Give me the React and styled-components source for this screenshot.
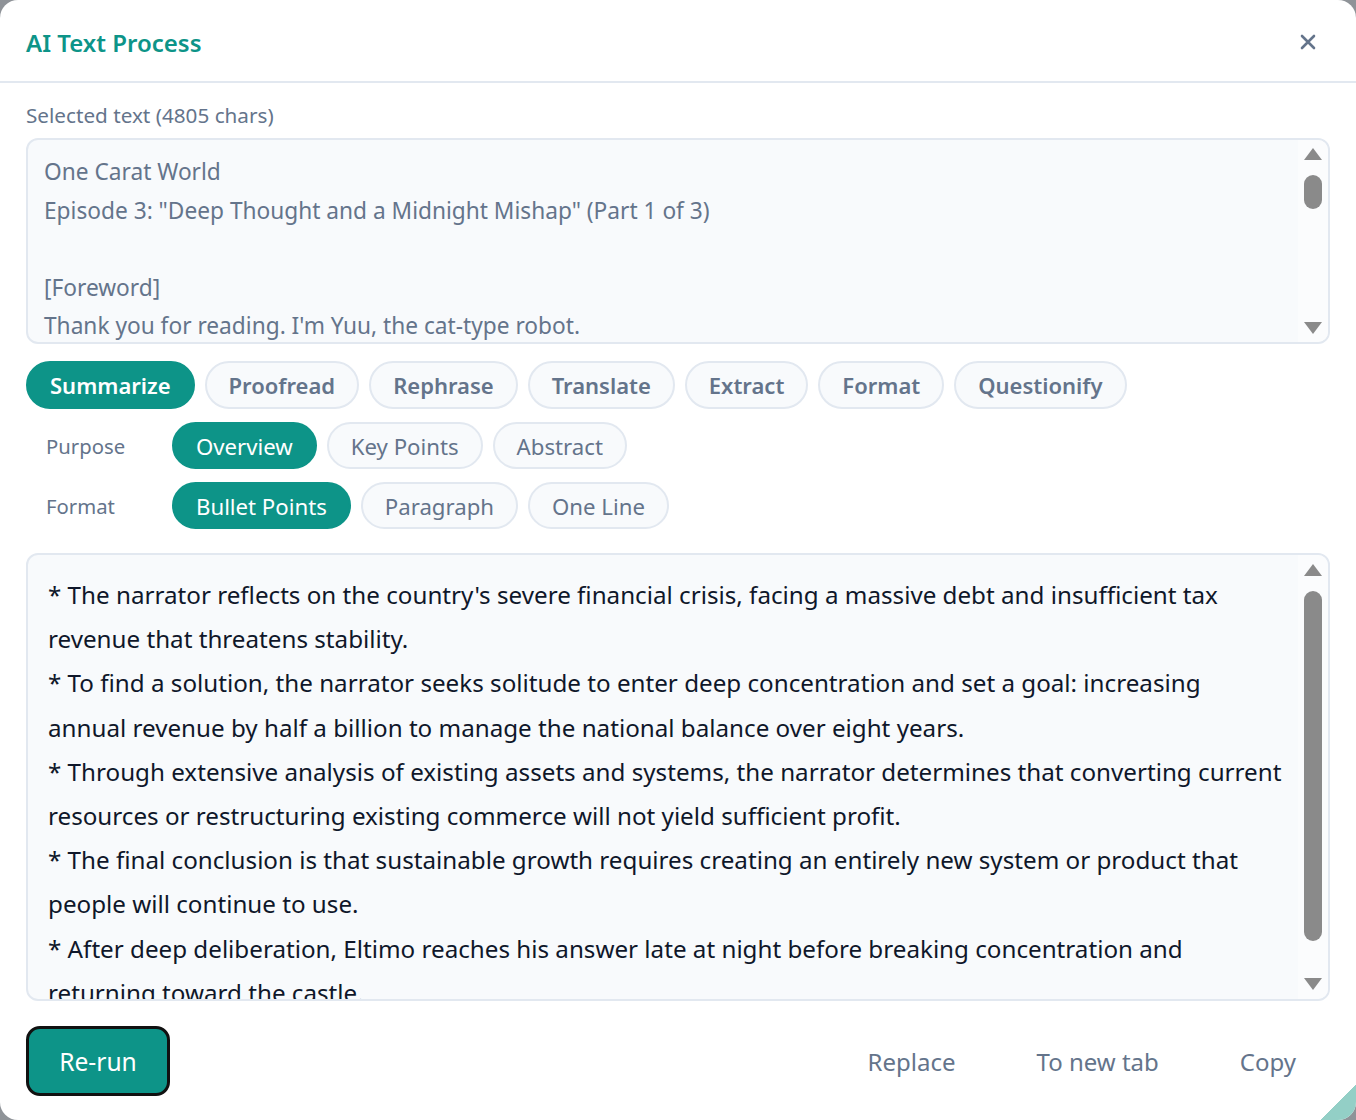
import styled, { createGlobalStyle } from 'styled-components';

const GlobalStyle = createGlobalStyle`
  html, body {
    margin: 0;
    padding: 0;
    background: #8f9398;
  }
  * {
    box-sizing: border-box;
  }
`;

const Dialog = styled.div`
  position: relative;
  width: 1356px;
  height: 1120px;
  background: #fff;
  border-radius: 18px;
  overflow: hidden;
  display: flex;
  flex-direction: column;
  font-family: 'Noto Sans', 'Open Sans', sans-serif;
`;

const Header = styled.div`
  height: 83px;
  flex-shrink: 0;
  display: flex;
  align-items: center;
  justify-content: space-between;
  padding: 2px 36px 0 26px;
  border-bottom: 2px solid #e2e8f0;
`;

const Title = styled.h1`
  margin: 0;
  padding-top: 2px;
  font-size: 24px;
  font-weight: 600;
  color: #0d9488;
`;

const CloseButton = styled.button`
  border: none;
  background: none;
  padding: 0;
  width: 24px;
  height: 24px;
  display: flex;
  align-items: center;
  justify-content: center;
  color: #64748b;
  cursor: pointer;
`;

const Body = styled.div`
  flex: 1;
  display: flex;
  flex-direction: column;
  padding: 18px 26px 0;
`;

const Label = styled.div`
  font-size: 20.7px;
  line-height: 28px;
  color: #64748b;
  margin-bottom: 9px;
`;

const TextBox = styled.div`
  position: relative;
  height: ${(p) => p.$height}px;
  flex-shrink: 0;
  border: 2px solid #e2e8f0;
  border-radius: 12px;
  background: #f8fafc;
  overflow: hidden;
  padding: ${(p) => p.$pad};
  font-size: ${(p) => p.$size}px;
  line-height: ${(p) => p.$lh}px;
  color: ${(p) => p.$color};
  white-space: pre;
`;

const ScrollTrack = styled.div`
  position: absolute;
  top: 0;
  right: 0;
  bottom: 0;
  width: 30px;
  background: #fbfcfd;
`;

const Arrow = styled.div`
  position: absolute;
  left: 6px;
  width: 0;
  height: 0;
  border-left: 9px solid transparent;
  border-right: 9px solid transparent;
  ${(p) =>
    p.$down
      ? `bottom: ${p.$off}px; border-top: 12px solid #8a8a8a;`
      : `top: ${p.$off}px; border-bottom: 12px solid #8a8a8a;`}
`;

const Thumb = styled.div`
  position: absolute;
  left: 6px;
  width: 18px;
  border-radius: 9px;
  background: #8a8a8a;
`;

const TabRow = styled.div`
  display: flex;
  gap: 10px;
  margin-top: 17px;
`;

const Pill = styled.button`
  height: ${(p) => (p.$strong ? 48 : 47)}px;
  padding: ${(p) => (p.$strong ? '0 22px' : '3px 22px 0')};
  border-radius: 999px;
  border: 2px solid ${(p) => (p.$active ? '#0d9488' : '#e2e8f0')};
  background: ${(p) => (p.$active ? '#0d9488' : '#f8fafc')};
  color: ${(p) => (p.$active ? '#fff' : '#64748b')};
  font-family: inherit;
  font-size: ${(p) => (p.$strong ? 22 : 22.2)}px;
  line-height: 1;
  font-weight: ${(p) => (p.$strong ? 600 : 400)};
  white-space: nowrap;
  cursor: pointer;
`;

const OptionRow = styled.div`
  display: flex;
  align-items: center;
  margin-top: 13px;
`;

const OptionLabel = styled.div`
  width: 146px;
  padding-left: 20px;
  font-size: 20.3px;
  color: #64748b;
`;

const Pills = styled.div`
  display: flex;
  gap: 10px;
`;

const Footer = styled.div`
  display: flex;
  align-items: center;
  justify-content: space-between;
  margin-top: 25px;
`;

const RerunButton = styled.button`
  width: 144px;
  height: 70px;
  border: 3px solid #111;
  border-radius: 14px;
  background: #0d9488;
  color: #fff;
  font-family: inherit;
  font-size: 24.6px;
  cursor: pointer;
`;

const Actions = styled.div`
  display: flex;
  gap: 13px;
`;

const ActionButton = styled.button`
  border: none;
  background: none;
  padding: 8px 34px;
  color: #64748b;
  font-family: inherit;
  font-size: 24px;
  cursor: pointer;
`;

const ResizeCorner = styled.div`
  position: absolute;
  right: 0;
  bottom: 0;
  width: 36px;
  height: 36px;
  background: linear-gradient(135deg, transparent 50%, #93cfc6 50%);
`;

const sourceText = [
  'One Carat World',
  'Episode 3: "Deep Thought and a Midnight Mishap" (Part 1 of 3)',
  '',
  '[Foreword]',
  "Thank you for reading. I'm Yuu, the cat-type robot.",
  'This episode continues the story of Eltimo and his plans for the kingdom.',
].join('\n');

const summaryText = [
  "* The narrator reflects on the country's severe financial crisis, facing a massive debt and insufficient tax",
  'revenue that threatens stability.',
  '* To find a solution, the narrator seeks solitude to enter deep concentration and set a goal: increasing',
  'annual revenue by half a billion to manage the national balance over eight years.',
  '* Through extensive analysis of existing assets and systems, the narrator determines that converting current',
  'resources or restructuring existing commerce will not yield sufficient profit.',
  '* The final conclusion is that sustainable growth requires creating an entirely new system or product that',
  'people will continue to use.',
  '* After deep deliberation, Eltimo reaches his answer late at night before breaking concentration and',
  'returning toward the castle.',
].join('\n');

const tabs = ['Summarize', 'Proofread', 'Rephrase', 'Translate', 'Extract', 'Format', 'Questionify'];

const options = [
  { label: 'Purpose', items: ['Overview', 'Key Points', 'Abstract'] },
  { label: 'Format', items: ['Bullet Points', 'Paragraph', 'One Line'] },
];

function FakeScrollbar({ thumbTop, thumbHeight, arrowTop, arrowBottom }) {
  return (
    <ScrollTrack>
      <Arrow $off={arrowTop} />
      <Thumb style={{ top: thumbTop, height: thumbHeight }} />
      <Arrow $down $off={arrowBottom} />
    </ScrollTrack>
  );
}

export default function App() {
  return (
    <>
      <GlobalStyle />
      <Dialog>
        <Header>
          <Title>AI Text Process</Title>
          <CloseButton aria-label="Close">
            <svg width="16" height="16" viewBox="0 0 16 16">
              <path d="M2 2L14 14M14 2L2 14" stroke="currentColor" strokeWidth="2.6" strokeLinecap="round" />
            </svg>
          </CloseButton>
        </Header>
        <Body>
          <Label>Selected text (4805 chars)</Label>
          <TextBox $height={206} $pad="13px 40px 0 16px" $size={22.7} $lh={38.5} $color="#64748b">
            {sourceText}
            <FakeScrollbar arrowTop={8} thumbTop={35} thumbHeight={34} arrowBottom={8} />
          </TextBox>

          <TabRow>
            {tabs.map((t, i) => (
              <Pill key={t} $strong $active={i === 0}>
                {t}
              </Pill>
            ))}
          </TabRow>

          {options.map((o) => (
            <OptionRow key={o.label}>
              <OptionLabel>{o.label}</OptionLabel>
              <Pills>
                {o.items.map((it, i) => (
                  <Pill key={it} $active={i === 0}>
                    {it}
                  </Pill>
                ))}
              </Pills>
            </OptionRow>
          ))}

          <TextBox
            style={{ marginTop: 24 }}
            $height={448}
            $pad="18px 40px 0 20px"
            $size={24.2}
            $lh={44.2}
            $color="#0f172a"
          >
            {summaryText}
            <FakeScrollbar arrowTop={9} thumbTop={36} thumbHeight={350} arrowBottom={9} />
          </TextBox>

          <Footer>
            <RerunButton>Re-run</RerunButton>
            <Actions>
              <ActionButton>Replace</ActionButton>
              <ActionButton>To new tab</ActionButton>
              <ActionButton>Copy</ActionButton>
            </Actions>
          </Footer>
        </Body>
        <ResizeCorner />
      </Dialog>
    </>
  );
}
